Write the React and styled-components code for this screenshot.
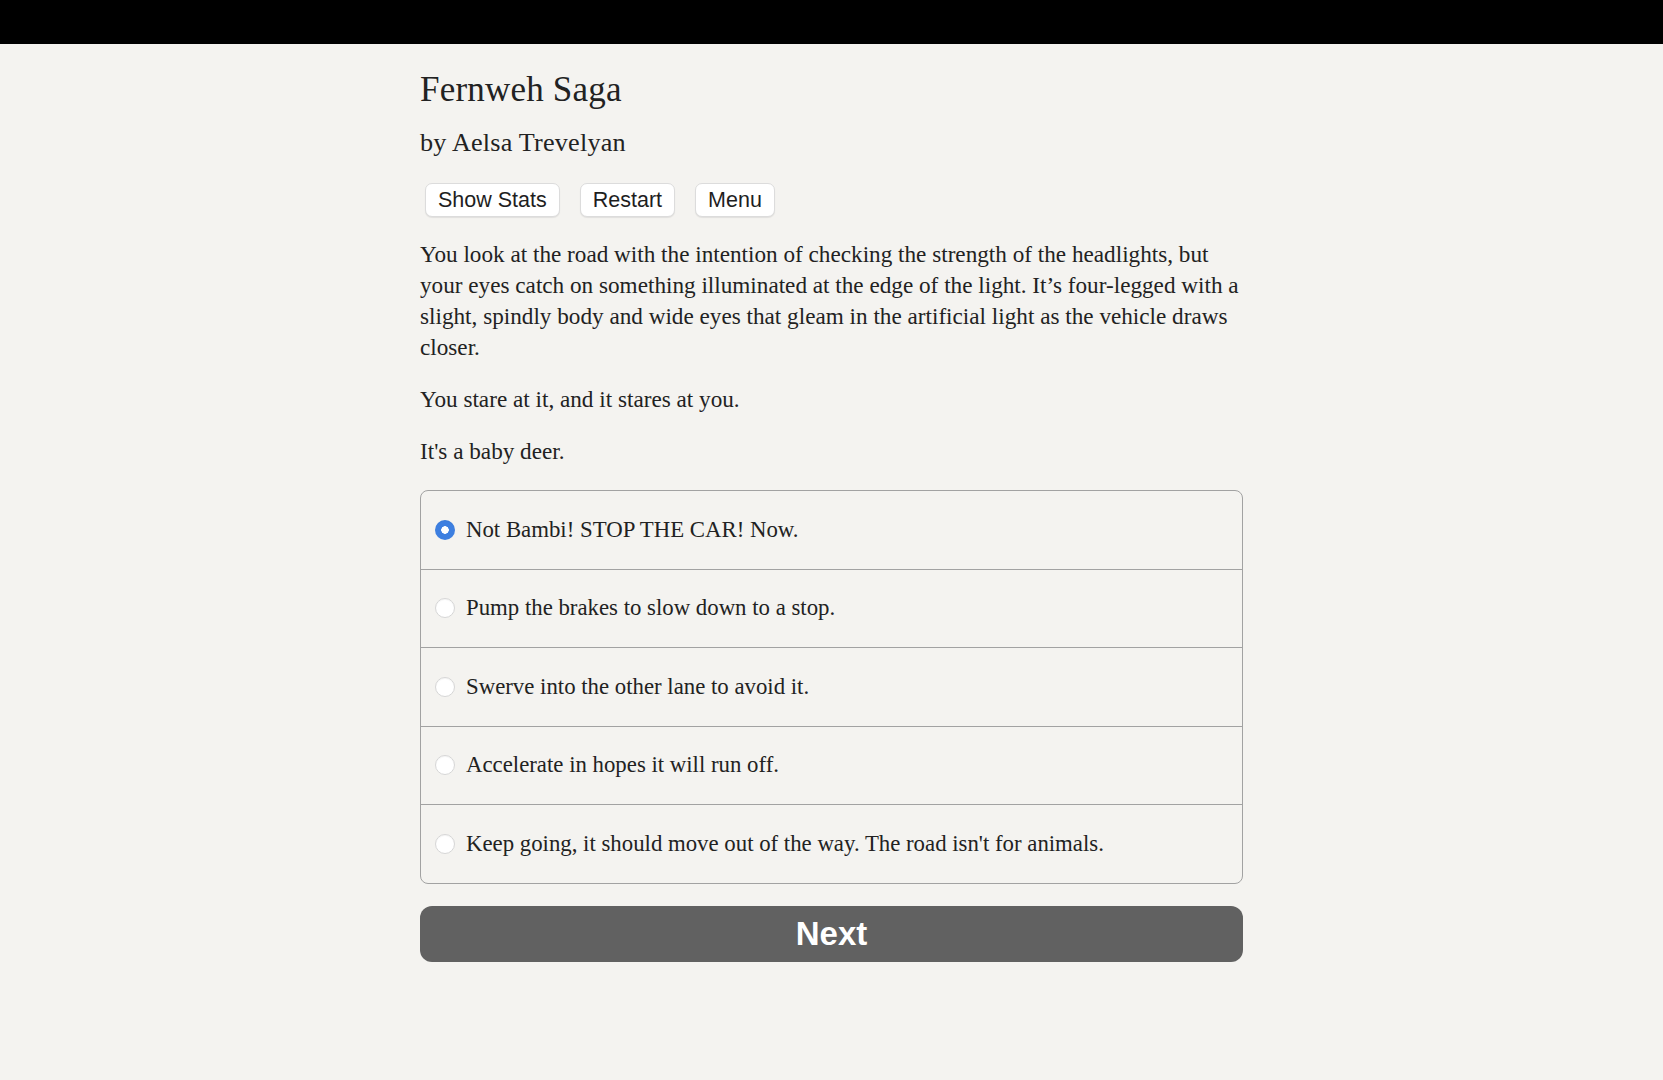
import React, { useState } from 'react';
import styled, { createGlobalStyle } from 'styled-components';

const GlobalStyle = createGlobalStyle`
    html, body {
        margin: 0;
        padding: 0;
        background-color: #f4f3f0;
    }
    body {
        font-family: "Liberation Serif", "Times New Roman", serif;
        color: #222;
    }
`

const choices = [
    'Not Bambi! STOP THE CAR! Now.',
    'Pump the brakes to slow down to a stop.',
    'Swerve into the other lane to avoid it.',
    'Accelerate in hopes it will run off.',
    "Keep going, it should move out of the way. The road isn't for animals.",
]

export default function App(){
    const [ selected, setSelected ] = useState( 0 );

    return(
        <>
            <GlobalStyle />
            <TopBar />
            <Page>
                <Title>Fernweh Saga</Title>
                <Byline>by Aelsa Trevelyan</Byline>

                <Toolbar>
                    <ToolButton>Show Stats</ToolButton>
                    <ToolButton>Restart</ToolButton>
                    <ToolButton>Menu</ToolButton>
                </Toolbar>

                <Passage>
                    <p>You look at the road with the intention of checking the strength of the headlights, but your eyes catch on something illuminated at the edge of the light. It’s four-legged with a slight, spindly body and wide eyes that gleam in the artificial light as the vehicle draws closer.</p>
                    <p>You stare at it, and it stares at you.</p>
                    <p>It's a baby deer.</p>
                </Passage>

                <ChoiceList>
                    { choices.map( ( text, i ) => (
                        <Choice key={ i }>
                            <Radio
                                type="radio"
                                name="choice"
                                checked={ selected === i }
                                onChange={ () => setSelected( i ) }
                            />
                            <span>{ text }</span>
                        </Choice>
                    ))}
                </ChoiceList>

                <NextButton>Next</NextButton>
            </Page>
        </>
    );
}

const TopBar = styled.div`
    height: 44px;
    background: #000;
`

const Page = styled.main`
    width: 823px;
    margin: 0 auto;
    padding-top: 26px;
    padding-bottom: 60px;
`

const Title = styled.h1`
    margin: 0;
    font-size: 35px;
    line-height: 40px;
    font-weight: normal;
    letter-spacing: 0.2px;
`

const Byline = styled.h2`
    margin: 17px 0 0;
    font-size: 26.2px;
    line-height: 32px;
    font-weight: normal;
    letter-spacing: 0.2px;
`

const Toolbar = styled.div`
    display: flex;
    gap: 20px;
    margin: 24px 0 0 5px;
`

const ToolButton = styled.button`
    height: 34px;
    padding: 0 12px;
    font-family: "Liberation Sans", Arial, sans-serif;
    font-size: 21.5px;
    color: #1e1e1e;
    background: #fff;
    border: 1px solid #dcdcdc;
    border-radius: 7px;
    box-shadow: 0 1px 1px rgba(0, 0, 0, 0.08);
    cursor: pointer;
`

const Passage = styled.div`
    margin-top: 22px;
    margin-right: -8px;
    font-size: 23.2px;
    line-height: 31px;

    p {
        margin: 0 0 21px;
    }
    p:last-child {
        margin-bottom: 0;
    }
`

const ChoiceList = styled.div`
    margin-top: 23px;
    border: 1.5px solid #a2a2a2;
    border-radius: 8px;
    overflow: hidden;
`

const Choice = styled.label`
    display: flex;
    align-items: center;
    gap: 11px;
    height: 77.5px;
    padding: 0 14px;
    font-size: 22.8px;
    cursor: pointer;

    & + & {
        border-top: 1.5px solid #a2a2a2;
    }
`

const Radio = styled.input`
    appearance: none;
    flex: none;
    width: 20px;
    height: 20px;
    margin: 0;
    border-radius: 50%;
    background: #fff;
    border: 1px solid #d6d6d6;
    box-shadow: inset 0 1px 1px rgba(0, 0, 0, 0.04);
    cursor: pointer;

    &:checked {
        border: none;
        background: radial-gradient(circle, #fff 0 3.5px, #3d7fe0 4px);
    }
`

const NextButton = styled.button`
    display: block;
    width: 100%;
    height: 56px;
    margin-top: 22px;
    font-family: "Liberation Sans", Arial, sans-serif;
    font-size: 33px;
    font-weight: bold;
    color: #fff;
    background: #616161;
    border: none;
    border-radius: 12px;
    cursor: pointer;
`
